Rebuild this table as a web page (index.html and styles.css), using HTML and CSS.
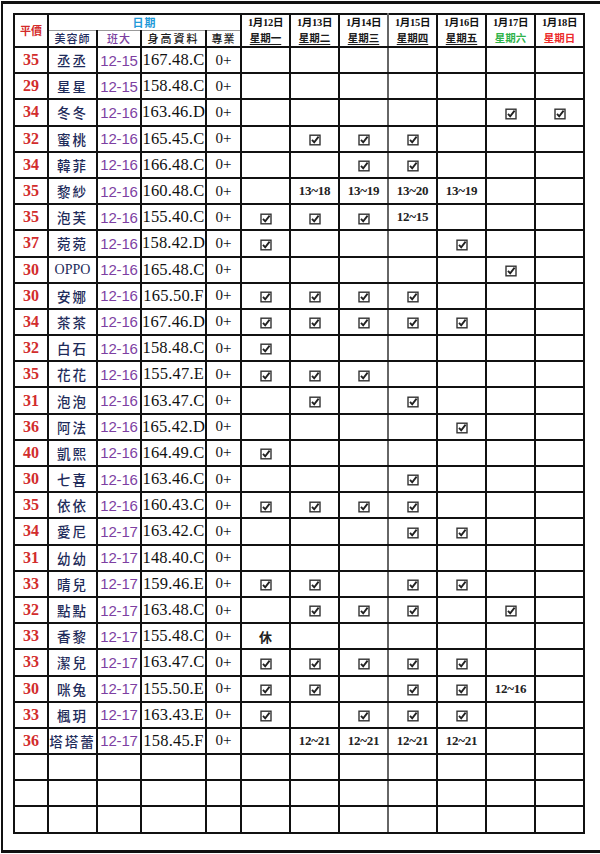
FILE: index.html
```html
<!DOCTYPE html>
<html lang="zh-Hant">
<head>
<meta charset="utf-8">
<title>排班表</title>
<link rel="stylesheet" href="styles.css">
</head>
<body>
<svg class="defs" width="0" height="0" aria-hidden="true">
  <symbol id="ck" viewBox="0 0 12 12">
    <rect x="1" y="1.2" width="10" height="9.6" fill="#fff" stroke="#333" stroke-width="1.4"/>
    <path d="M3 5.8 L5.2 8.3 L9.6 2.6" fill="none" stroke="#222" stroke-width="1.9"/>
  </symbol>
</svg>
<div class="page">
<table class="sheet">
  <colgroup>
    <col class="w-p"><col class="w-n"><col class="w-c"><col class="w-h"><col class="w-z">
    <col class="w-d"><col class="w-d"><col class="w-d"><col class="w-d"><col class="w-d"><col class="w-d"><col class="w-d">
  </colgroup>
  <thead>
    <tr class="hr1">
      <th rowspan="2" class="hp">平價</th>
      <th colspan="4" class="hdate">日期</th>
      <th class="dt">1月12日</th><th class="dt">1月13日</th><th class="dt g">1月14日</th><th class="dt">1月15日</th><th class="dt">1月16日</th><th class="dt">1月17日</th><th class="dt">1月18日</th>
    </tr>
    <tr class="hr2">
      <th class="hn">美容師</th><th class="hc">班大</th><th class="hh">身高資料</th><th class="hz">專業</th>
      <th class="wk"><u>星期一</u></th><th class="wk"><u>星期二</u></th><th class="wk g"><u>星期三</u></th><th class="wk"><u>星期四</u></th><th class="wk"><u>星期五</u></th><th class="wk sat">星期六</th><th class="wk sun">星期日</th>
    </tr>
  </thead>
  <tbody>
    <tr><td class="p">35</td><td class="n">丞丞</td><td class="c">12-15</td><td class="h">167.48.C</td><td class="z">0+</td><td></td><td></td><td class="g"></td><td></td><td></td><td></td><td></td></tr>
    <tr><td class="p">29</td><td class="n">星星</td><td class="c">12-15</td><td class="h">158.48.C</td><td class="z">0+</td><td></td><td></td><td class="g"></td><td></td><td></td><td></td><td></td></tr>
    <tr><td class="p">34</td><td class="n">冬冬</td><td class="c">12-16</td><td class="h">163.46.D</td><td class="z">0+</td><td></td><td></td><td class="g"></td><td></td><td></td><td><svg class="ck"><use href="#ck"/></svg></td><td><svg class="ck"><use href="#ck"/></svg></td></tr>
    <tr><td class="p">32</td><td class="n">蜜桃</td><td class="c">12-16</td><td class="h">165.45.C</td><td class="z">0+</td><td></td><td><svg class="ck"><use href="#ck"/></svg></td><td class="g"><svg class="ck"><use href="#ck"/></svg></td><td><svg class="ck"><use href="#ck"/></svg></td><td></td><td></td><td></td></tr>
    <tr><td class="p">34</td><td class="n">韓菲</td><td class="c">12-16</td><td class="h">166.48.C</td><td class="z">0+</td><td></td><td></td><td class="g"><svg class="ck"><use href="#ck"/></svg></td><td><svg class="ck"><use href="#ck"/></svg></td><td></td><td></td><td></td></tr>
    <tr><td class="p">35</td><td class="n">黎紗</td><td class="c">12-16</td><td class="h">160.48.C</td><td class="z">0+</td><td></td><td class="t">13~18</td><td class="g t">13~19</td><td class="t">13~20</td><td class="t">13~19</td><td></td><td></td></tr>
    <tr><td class="p">35</td><td class="n">泡芙</td><td class="c">12-16</td><td class="h">155.40.C</td><td class="z">0+</td><td><svg class="ck"><use href="#ck"/></svg></td><td><svg class="ck"><use href="#ck"/></svg></td><td class="g"><svg class="ck"><use href="#ck"/></svg></td><td class="t">12~15</td><td></td><td></td><td></td></tr>
    <tr><td class="p">37</td><td class="n">菀菀</td><td class="c">12-16</td><td class="h">158.42.D</td><td class="z">0+</td><td><svg class="ck"><use href="#ck"/></svg></td><td></td><td class="g"></td><td></td><td><svg class="ck"><use href="#ck"/></svg></td><td></td><td></td></tr>
    <tr><td class="p">30</td><td class="n oppo">OPPO</td><td class="c">12-16</td><td class="h">165.48.C</td><td class="z">0+</td><td></td><td></td><td class="g"></td><td></td><td></td><td><svg class="ck"><use href="#ck"/></svg></td><td></td></tr>
    <tr><td class="p">30</td><td class="n">安娜</td><td class="c">12-16</td><td class="h">165.50.F</td><td class="z">0+</td><td><svg class="ck"><use href="#ck"/></svg></td><td><svg class="ck"><use href="#ck"/></svg></td><td class="g"><svg class="ck"><use href="#ck"/></svg></td><td><svg class="ck"><use href="#ck"/></svg></td><td></td><td></td><td></td></tr>
    <tr><td class="p">34</td><td class="n">茶茶</td><td class="c">12-16</td><td class="h">167.46.D</td><td class="z">0+</td><td><svg class="ck"><use href="#ck"/></svg></td><td><svg class="ck"><use href="#ck"/></svg></td><td class="g"><svg class="ck"><use href="#ck"/></svg></td><td><svg class="ck"><use href="#ck"/></svg></td><td><svg class="ck"><use href="#ck"/></svg></td><td></td><td></td></tr>
    <tr><td class="p">32</td><td class="n">白石</td><td class="c">12-16</td><td class="h">158.48.C</td><td class="z">0+</td><td><svg class="ck"><use href="#ck"/></svg></td><td></td><td class="g"></td><td></td><td></td><td></td><td></td></tr>
    <tr><td class="p">35</td><td class="n">花花</td><td class="c">12-16</td><td class="h">155.47.E</td><td class="z">0+</td><td><svg class="ck"><use href="#ck"/></svg></td><td><svg class="ck"><use href="#ck"/></svg></td><td class="g"><svg class="ck"><use href="#ck"/></svg></td><td></td><td></td><td></td><td></td></tr>
    <tr><td class="p">31</td><td class="n">泡泡</td><td class="c">12-16</td><td class="h">163.47.C</td><td class="z">0+</td><td></td><td><svg class="ck"><use href="#ck"/></svg></td><td class="g"></td><td><svg class="ck"><use href="#ck"/></svg></td><td></td><td></td><td></td></tr>
    <tr><td class="p">36</td><td class="n">阿法</td><td class="c">12-16</td><td class="h">165.42.D</td><td class="z">0+</td><td></td><td></td><td class="g"></td><td></td><td><svg class="ck"><use href="#ck"/></svg></td><td></td><td></td></tr>
    <tr><td class="p">40</td><td class="n">凱熙</td><td class="c">12-16</td><td class="h">164.49.C</td><td class="z">0+</td><td><svg class="ck"><use href="#ck"/></svg></td><td></td><td class="g"></td><td></td><td></td><td></td><td></td></tr>
    <tr><td class="p">30</td><td class="n">七喜</td><td class="c">12-16</td><td class="h">163.46.C</td><td class="z">0+</td><td></td><td></td><td class="g"></td><td><svg class="ck"><use href="#ck"/></svg></td><td></td><td></td><td></td></tr>
    <tr><td class="p">35</td><td class="n">依依</td><td class="c">12-16</td><td class="h">160.43.C</td><td class="z">0+</td><td><svg class="ck"><use href="#ck"/></svg></td><td><svg class="ck"><use href="#ck"/></svg></td><td class="g"><svg class="ck"><use href="#ck"/></svg></td><td><svg class="ck"><use href="#ck"/></svg></td><td></td><td></td><td></td></tr>
    <tr><td class="p">34</td><td class="n">愛尼</td><td class="c">12-17</td><td class="h">163.42.C</td><td class="z">0+</td><td></td><td></td><td class="g"></td><td><svg class="ck"><use href="#ck"/></svg></td><td><svg class="ck"><use href="#ck"/></svg></td><td></td><td></td></tr>
    <tr><td class="p">31</td><td class="n">幼幼</td><td class="c">12-17</td><td class="h">148.40.C</td><td class="z">0+</td><td></td><td></td><td class="g"></td><td></td><td></td><td></td><td></td></tr>
    <tr><td class="p">33</td><td class="n">晴兒</td><td class="c">12-17</td><td class="h">159.46.E</td><td class="z">0+</td><td><svg class="ck"><use href="#ck"/></svg></td><td><svg class="ck"><use href="#ck"/></svg></td><td class="g"></td><td><svg class="ck"><use href="#ck"/></svg></td><td><svg class="ck"><use href="#ck"/></svg></td><td></td><td></td></tr>
    <tr><td class="p">32</td><td class="n">點點</td><td class="c">12-17</td><td class="h">163.48.C</td><td class="z">0+</td><td></td><td><svg class="ck"><use href="#ck"/></svg></td><td class="g"><svg class="ck"><use href="#ck"/></svg></td><td><svg class="ck"><use href="#ck"/></svg></td><td></td><td><svg class="ck"><use href="#ck"/></svg></td><td></td></tr>
    <tr><td class="p">33</td><td class="n">香黎</td><td class="c">12-17</td><td class="h">155.48.C</td><td class="z">0+</td><td class="rest">休</td><td></td><td class="g"></td><td></td><td></td><td></td><td></td></tr>
    <tr><td class="p">33</td><td class="n">潔兒</td><td class="c">12-17</td><td class="h">163.47.C</td><td class="z">0+</td><td><svg class="ck"><use href="#ck"/></svg></td><td><svg class="ck"><use href="#ck"/></svg></td><td class="g"><svg class="ck"><use href="#ck"/></svg></td><td><svg class="ck"><use href="#ck"/></svg></td><td><svg class="ck"><use href="#ck"/></svg></td><td></td><td></td></tr>
    <tr><td class="p">30</td><td class="n">咪兔</td><td class="c">12-17</td><td class="h">155.50.E</td><td class="z">0+</td><td><svg class="ck"><use href="#ck"/></svg></td><td><svg class="ck"><use href="#ck"/></svg></td><td class="g"></td><td><svg class="ck"><use href="#ck"/></svg></td><td><svg class="ck"><use href="#ck"/></svg></td><td class="t">12~16</td><td></td></tr>
    <tr><td class="p">33</td><td class="n">楓玥</td><td class="c">12-17</td><td class="h">163.43.E</td><td class="z">0+</td><td><svg class="ck"><use href="#ck"/></svg></td><td></td><td class="g"><svg class="ck"><use href="#ck"/></svg></td><td><svg class="ck"><use href="#ck"/></svg></td><td><svg class="ck"><use href="#ck"/></svg></td><td></td><td></td></tr>
    <tr><td class="p">36</td><td class="n">塔塔蕾</td><td class="c">12-17</td><td class="h">158.45.F</td><td class="z">0+</td><td></td><td class="t">12~21</td><td class="g t">12~21</td><td class="t">12~21</td><td class="t">12~21</td><td></td><td></td></tr>
    <tr><td></td><td></td><td></td><td></td><td></td><td></td><td></td><td class="g"></td><td></td><td></td><td></td><td></td></tr>
    <tr><td></td><td></td><td></td><td></td><td></td><td></td><td></td><td class="g"></td><td></td><td></td><td></td><td></td></tr>
    <tr><td></td><td></td><td></td><td></td><td></td><td></td><td></td><td class="g"></td><td></td><td></td><td></td><td></td></tr>
  </tbody>
</table>
</div>
</body>
</html>
```

FILE: styles.css
```css
html, body {
  margin: 0;
  padding: 0;
  background: #fff;
}

.defs {
  position: absolute;
  width: 0;
  height: 0;
}

.page {
  box-sizing: border-box;
  margin: 1px 0 0 1px;
  width: 599px;
  height: 852px;
  border-top: 3px solid #111;
  border-left: 2px solid #111;
  border-bottom: 3px solid #111;
  padding: 9px 0 0 10px;
  font-family: "Liberation Serif", "Noto Sans CJK TC", serif;
}

.sheet {
  border-collapse: collapse;
  table-layout: fixed;
  width: 569px;
  border: 2px solid #111;
  border-left-color: #777;
}

.w-p { width: 34px; }
.w-n { width: 49px; }
.w-c { width: 44px; }
.w-h { width: 65px; }
.w-z { width: 35px; }
.w-d { width: 49px; }

.sheet th,
.sheet td {
  border: 2px solid #111;
  padding: 0;
  text-align: center;
  vertical-align: middle;
  white-space: nowrap;
  overflow: hidden;
}

.sheet .g { border-left-color: #666; border-right-color: #666; }

.hr1 th { height: 15px; }
.hr2 th { height: 15px; }

.hp {
  color: #d32a2a;
  font-family: "Noto Sans CJK TC", sans-serif;
  font-size: 11px;
  font-weight: 700;
  line-height: 1;
}

.hdate {
  color: #1f9ad8;
  font-family: "Noto Sans CJK TC", sans-serif;
  font-size: 11px;
  font-weight: 700;
  letter-spacing: 1px;
  line-height: 1;
}

.sheet .hdate { border-bottom: 1px solid #999; }
.sheet .hn, .sheet .hc, .sheet .hh, .sheet .hz { border-top: 1px solid #999; }

.hn, .hc, .hh, .hz {
  font-family: "Noto Sans CJK TC", sans-serif;
  font-size: 11px;
  font-weight: 500;
  line-height: 1;
  letter-spacing: 1px;
}
.hn { color: #1f2c5e; }
.hc { color: #7b3fa0; }
.hh { color: #1a1a1a; letter-spacing: 2px; }
.hz { color: #1a1a1a; }

.dt {
  font-family: "Liberation Serif", "Noto Sans CJK TC", serif;
  font-size: 10.5px;
  font-weight: 700;
  color: #111;
  line-height: 1;
  letter-spacing: -0.3px;
}

.sheet .dt { border-bottom-style: hidden; }

.wk {
  font-family: "Noto Sans CJK TC", sans-serif;
  font-size: 10.5px;
  font-weight: 700;
  color: #1b1b1b;
  line-height: 1;
}
.wk u { text-decoration-thickness: 1px; text-underline-offset: 2px; }
.wk.sat { color: #2fb24a; }
.wk.sun { color: #ec2b2b; }

.sheet tbody td { height: 24.2px; }

.p {
  color: #d22c2c;
  font-family: "Liberation Serif", serif;
  font-size: 16px;
  font-weight: 700;
}

.n {
  color: #1e2b5a;
  font-family: "Noto Sans CJK TC", sans-serif;
  font-size: 13.5px;
  font-weight: 500;
  letter-spacing: 2px;
}
.n.oppo {
  font-family: "Liberation Serif", serif;
  font-size: 14px;
  letter-spacing: 0;
  font-weight: 400;
}

.c {
  color: #7d3fa2;
  font-family: "Liberation Sans", sans-serif;
  font-size: 15px;
  letter-spacing: -0.2px;
}

.h {
  color: #111;
  font-family: "Liberation Serif", serif;
  font-size: 16.5px;
  letter-spacing: 0.2px;
}

.z {
  color: #111;
  font-family: "Liberation Serif", serif;
  font-size: 15px;
}

.t {
  color: #222;
  font-family: "Liberation Serif", serif;
  font-size: 13px;
  font-weight: 700;
  letter-spacing: -0.3px;
}

.rest {
  color: #222;
  font-family: "Noto Sans CJK TC", sans-serif;
  font-size: 13px;
  font-weight: 700;
}

.ck {
  display: inline-block;
  width: 12px;
  height: 12px;
  vertical-align: middle;
}
```
